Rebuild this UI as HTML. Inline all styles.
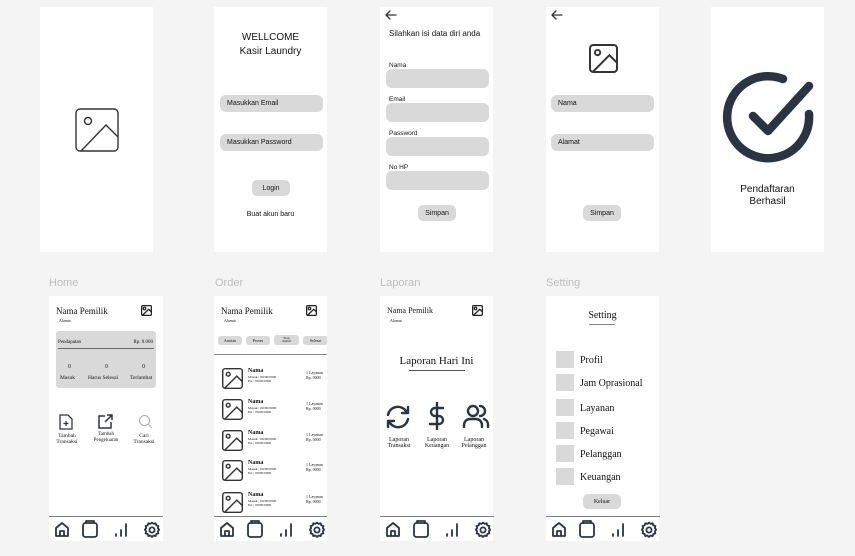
<!DOCTYPE html>
<html><head><meta charset="utf-8"><style>
*{margin:0;padding:0;box-sizing:border-box}
body{width:855px;height:556px;background:#f4f4f4;position:relative;overflow:hidden;font-family:"Liberation Sans",sans-serif;color:#111}
.c{position:absolute;background:#fff}
.a{position:absolute}
.f{position:absolute;background:#d9d9d9;border-radius:6px;font-size:7px;padding-left:7px;display:flex;align-items:center}
.b{position:absolute;background:#d9d9d9;border-radius:5px;font-size:7px;display:flex;align-items:center;justify-content:center}
.s{font-family:"Liberation Serif",serif}
.lbl{position:absolute;top:277px;font-size:11px;color:#bdbdbd}
.nav{position:absolute;left:0;top:220px;width:114px;height:25px;border-top:1.5px solid #7c8088}
.sq{position:absolute;left:10px;width:18px;height:17px;background:#d9d9d9}
.si{position:absolute;left:34px;font-size:10px}
.bk{position:absolute;left:5px;top:3px;width:12px;height:10px}
</style></head><body>
<svg width="0" height="0" style="position:absolute">
<defs>
<symbol id="img" viewBox="0 0 44 44"><rect x="1" y="1" width="42" height="42" rx="4" fill="none" stroke="#333" stroke-width="1.4"/><circle cx="13" cy="13" r="3.5" fill="none" stroke="#333" stroke-width="1.4"/><polyline points="6,43 31,17 43,29" fill="none" stroke="#333" stroke-width="1.4"/></symbol>
<symbol id="imgm" viewBox="0 0 44 44"><rect x="1.5" y="1.5" width="41" height="41" rx="5" fill="none" stroke="#333" stroke-width="3"/><circle cx="13" cy="13" r="4" fill="none" stroke="#333" stroke-width="3"/><polyline points="6,42 31,17 42,28" fill="none" stroke="#333" stroke-width="3"/></symbol>
<symbol id="imgs" viewBox="0 0 44 44"><rect x="2.5" y="2.5" width="39" height="39" rx="5" fill="none" stroke="#222" stroke-width="5"/><circle cx="14" cy="14" r="5" fill="none" stroke="#222" stroke-width="5"/><polyline points="6,41 31,17 42,28" fill="none" stroke="#222" stroke-width="5"/></symbol>
<symbol id="nav" viewBox="0 0 114 25"><g fill="none" stroke="#2c3444" stroke-width="1.8" stroke-linejoin="round" stroke-linecap="round">
<path d="M7 19V11l6-5 6 5v8zM11 19v-5h4v5"/>
<rect x="34" y="6" width="14" height="14" rx="2.5"/><path d="M37 6V4h8v2"/>
<path d="M67 19v-2M72 19v-6M77 19V7"/>
<circle cx="103" cy="13" r="2.6"/><path d="M103 5.5l1.6 1.4 2.1-.6.6 2.1 2.1.6-.6 2.1 1.4 1.6-1.4 1.6.6 2.1-2.1.6-.6 2.1-2.1-.6-1.6 1.4-1.6-1.4-2.1.6-.6-2.1-2.1-.6.6-2.1-1.4-1.6 1.4-1.6-.6-2.1 2.1-.6.6-2.1 2.1.6z"/>
</g></symbol>
<symbol id="back" viewBox="0 0 12 10"><path d="M11 5H1.5M5 1L1 5l4 4" fill="none" stroke="#333" stroke-width="1.3" stroke-linecap="round" stroke-linejoin="round"/></symbol>
</defs></svg>

<div class="c" style="left:40px;top:7px;width:113px;height:245px"><svg class="a" style="left:35px;top:101px" width="44" height="44"><use href="#img"/></svg></div>

<div class="c" style="left:214px;top:7px;width:113px;height:245px">
<div class="a" style="left:0;width:113px;top:24px;text-align:center;font-size:10px;line-height:14px">WELLCOME<br>Kasir Laundry</div>
<div class="f" style="left:6px;top:88px;width:103px;height:17px">Masukkan Email</div>
<div class="f" style="left:6px;top:127px;width:103px;height:17px">Masukkan Password</div>
<div class="b" style="left:38px;top:173px;width:38px;height:16px">Login</div>
<div class="a" style="left:0;width:113px;top:204px;text-align:center;font-size:7px">Buat akun baru</div>
</div>

<div class="c" style="left:380px;top:7px;width:113px;height:245px">
<svg class="bk"><use href="#back"/></svg>
<div class="a" style="left:9px;top:22px;font-size:8px">Silahkan isi data diri anda</div>
<div class="a" style="left:9px;top:55px;font-size:6.5px">Nama</div><div class="f" style="left:6px;top:62px;width:103px;height:19px"></div>
<div class="a" style="left:9px;top:89px;font-size:6.5px">Email</div><div class="f" style="left:6px;top:96px;width:103px;height:19px"></div>
<div class="a" style="left:9px;top:123px;font-size:6.5px">Password</div><div class="f" style="left:6px;top:130px;width:103px;height:19px"></div>
<div class="a" style="left:9px;top:157px;font-size:6.5px">No HP</div><div class="f" style="left:6px;top:164px;width:103px;height:19px"></div>
<div class="b" style="left:38px;top:198px;width:38px;height:16px">Simpan</div>
</div>

<div class="c" style="left:546px;top:7px;width:113px;height:245px">
<svg class="bk"><use href="#back"/></svg>
<svg class="a" style="left:42px;top:37px" width="31" height="29"><use href="#imgm"/></svg>
<div class="f" style="left:5px;top:88px;width:103px;height:17px">Nama</div>
<div class="f" style="left:5px;top:127px;width:103px;height:17px">Alamat</div>
<div class="b" style="left:37px;top:198px;width:38px;height:16px">Simpan</div>
</div>

<div class="c" style="left:711px;top:7px;width:113px;height:245px">
<svg class="a" style="left:0;top:60px" width="113" height="110" viewBox="711 67 113 110"><g fill="none" stroke="#2c3444" stroke-width="8.5" stroke-linecap="round" stroke-linejoin="round"><path d="M783 79A41 41 0 1 0 809 114"/><path d="M753 116l15 15 41-45"/></g></svg>
<div class="a" style="left:0;width:113px;top:177px;text-align:center;font-size:10px;line-height:12px">Pendaftaran<br>Berhasil</div>
</div>

<div class="lbl" style="left:49px">Home</div>
<div class="lbl" style="left:215px">Order</div>
<div class="lbl" style="left:380px">Laporan</div>
<div class="lbl" style="left:546px">Setting</div>

<div class="c s" style="left:49px;top:296px;width:114px;height:245px">
<div class="a" style="left:7px;top:10px;font-size:9px">Nama Pemilik</div>
<div class="a" style="left:10px;top:22px;font-size:4px">Alamat</div>
<svg class="a" style="left:92px;top:9px" width="11" height="11"><use href="#imgs"/></svg>
<div class="a" style="left:7px;top:35px;width:100px;height:57px;background:#d9d9d9;border-radius:3px">
<div class="a" style="left:2px;top:9px;font-size:5px">Pendapatan</div>
<div class="a" style="right:3px;top:9px;font-size:5px">Rp. 0.000</div>
<div class="a" style="left:2px;top:17px;width:96px;border-top:1px solid #666"></div>
<div class="a" style="left:12px;top:33px;font-size:6px">0</div><div class="a" style="left:49px;top:33px;font-size:6px">0</div><div class="a" style="left:86px;top:33px;font-size:6px">0</div>
<div class="a" style="left:4px;top:44px;font-size:5.5px">Masuk</div><div class="a" style="left:32px;top:44px;font-size:5.5px">Harus Selesai</div><div class="a" style="left:74px;top:44px;font-size:5.5px">Terlambat</div>
</div>
<svg class="a" style="left:10px;top:118px" width="14" height="16" viewBox="0 0 14 16"><g fill="none" stroke="#2c3444" stroke-width="1.3"><path d="M1 1h8l4 4v10H1z"/><path d="M7 7v5M4.5 9.5h5"/></g></svg>
<svg class="a" style="left:49px;top:118px" width="15" height="15" viewBox="0 0 15 15"><g fill="none" stroke="#2c3444" stroke-width="1.5"><path d="M7 2H1v12h12V8M9 1h5v5M14 1L7 8"/></g></svg>
<svg class="a" style="left:89px;top:118px" width="15" height="15" viewBox="0 0 15 15"><g fill="none" stroke="#aaa" stroke-width="1"><circle cx="6.5" cy="6.5" r="5"/><path d="M10 10l4 4"/></g></svg>
<div class="a" style="left:3px;top:137px;width:30px;text-align:center;font-size:5.5px;line-height:6px">Tambah<br>Transaksi</div>
<div class="a" style="left:38px;top:136px;width:38px;text-align:center;font-size:5px;line-height:5.5px">Tambah<br>Pengeluaran</div>
<div class="a" style="left:80px;top:137px;width:30px;text-align:center;font-size:5.5px;line-height:6px">Cari<br>Transaksi</div>
<div class="nav"><svg width="114" height="25"><use href="#nav"/></svg></div>
</div>

<div class="c s" style="left:214px;top:296px;width:113px;height:245px;overflow:hidden">
<div class="a" style="left:7px;top:10px;font-size:9px">Nama Pemilik</div>
<div class="a" style="left:10px;top:22px;font-size:4px">Alamat</div>
<svg class="a" style="left:92px;top:9px" width="11" height="11"><use href="#imgs"/></svg>
<div class="b" style="left:4px;top:40px;width:24px;height:9px;font-size:4px;border-radius:3px">Antrian</div>
<div class="b" style="left:32px;top:40px;width:24px;height:9px;font-size:4px;border-radius:3px">Proses</div>
<div class="b" style="left:60px;top:39px;width:25px;height:10px;font-size:3.5px;line-height:3.5px;text-align:center;border-radius:3px">Siap<br>Ambil</div>
<div class="b" style="left:89px;top:40px;width:25px;height:9px;font-size:4px;border-radius:3px">Selesai</div>
<div class="a" style="left:0;top:58px;width:113px;border-top:1px solid #888"></div>
<div class="a" style="left:0;top:72px;width:113px">
<div class="a" style="top:0;left:0;width:113px;height:24px"><svg class="a" style="left:8px;top:0" width="21" height="21"><use href="#imgm"/></svg><div class="a" style="left:34px;top:0;font-size:6px;font-weight:bold">Nama</div><div class="a" style="left:34px;top:7px;font-size:3.5px;line-height:4px">Masuk : 00/00/0000<br>Est : 00/00/0000</div><div class="a" style="left:92px;top:3px;font-size:4px;line-height:4.5px">1 Layanan<br>Rp. 0000</div></div>
<div class="a" style="top:31px;left:0;width:113px;height:24px"><svg class="a" style="left:8px;top:0" width="21" height="21"><use href="#imgm"/></svg><div class="a" style="left:34px;top:0;font-size:6px;font-weight:bold">Nama</div><div class="a" style="left:34px;top:7px;font-size:3.5px;line-height:4px">Masuk : 00/00/0000<br>Est : 00/00/0000</div><div class="a" style="left:92px;top:3px;font-size:4px;line-height:4.5px">1 Layanan<br>Rp. 0000</div></div>
<div class="a" style="top:62px;left:0;width:113px;height:24px"><svg class="a" style="left:8px;top:0" width="21" height="21"><use href="#imgm"/></svg><div class="a" style="left:34px;top:0;font-size:6px;font-weight:bold">Nama</div><div class="a" style="left:34px;top:7px;font-size:3.5px;line-height:4px">Masuk : 00/00/0000<br>Est : 00/00/0000</div><div class="a" style="left:92px;top:3px;font-size:4px;line-height:4.5px">1 Layanan<br>Rp. 0000</div></div>
<div class="a" style="top:92px;left:0;width:113px;height:24px"><svg class="a" style="left:8px;top:0" width="21" height="21"><use href="#imgm"/></svg><div class="a" style="left:34px;top:0;font-size:6px;font-weight:bold">Nama</div><div class="a" style="left:34px;top:7px;font-size:3.5px;line-height:4px">Masuk : 00/00/0000<br>Est : 00/00/0000</div><div class="a" style="left:92px;top:3px;font-size:4px;line-height:4.5px">1 Layanan<br>Rp. 0000</div></div>
<div class="a" style="top:124px;left:0;width:113px;height:24px"><svg class="a" style="left:8px;top:0" width="21" height="21"><use href="#imgm"/></svg><div class="a" style="left:34px;top:0;font-size:6px;font-weight:bold">Nama</div><div class="a" style="left:34px;top:7px;font-size:3.5px;line-height:4px">Masuk : 00/00/0000<br>Est : 00/00/0000</div><div class="a" style="left:92px;top:3px;font-size:4px;line-height:4.5px">1 Layanan<br>Rp. 0000</div></div>
</div>
<div class="nav" style="background:#fff"><svg width="114" height="25"><use href="#nav"/></svg></div>
</div>

<div class="c s" style="left:380px;top:296px;width:113px;height:245px">
<div class="a" style="left:7px;top:10px;font-size:8px">Nama Pemilik</div>
<div class="a" style="left:10px;top:22px;font-size:4px">Alamat</div>
<svg class="a" style="left:92px;top:9px" width="11" height="11"><use href="#imgs"/></svg>
<div class="a" style="left:0;width:113px;top:59px;text-align:center;font-size:11px">Laporan Hari Ini</div>
<div class="a" style="left:29px;top:74px;width:56px;border-top:1.5px solid #555"></div>
<svg class="a" style="left:4px;top:108px" width="28" height="26" viewBox="0 0 28 26"><g fill="none" stroke="#2c3444" stroke-width="2.4" stroke-linecap="round" stroke-linejoin="round"><path d="M4 11a10 10 0 0 1 18-4l2 2M24 3v6h-6M24 15a10 10 0 0 1-18 4l-2-2M4 23v-6h6"/></g></svg>
<svg class="a" style="left:48px;top:106px" width="18" height="28" viewBox="0 0 18 28"><g fill="none" stroke="#2c3444" stroke-width="2.4" stroke-linecap="round"><path d="M9 1v26M15 6H7a4 4 0 0 0 0 8h4a4 4 0 0 1 0 8H2"/></g></svg>
<svg class="a" style="left:82px;top:108px" width="28" height="24" viewBox="0 0 28 24"><g fill="none" stroke="#2c3444" stroke-width="2.4" stroke-linecap="round"><circle cx="11" cy="7" r="5"/><path d="M2 23v-2a6 6 0 0 1 6-6h6a6 6 0 0 1 6 6v2M18 2a5 5 0 0 1 0 10M22 15a6 6 0 0 1 4 6v2"/></g></svg>
<div class="a" style="left:0;top:141px;width:38px;text-align:center;font-size:6px;line-height:6px">Laporan<br>Transaksi</div>
<div class="a" style="left:38px;top:141px;width:38px;text-align:center;font-size:6px;line-height:6px">Laporan<br>Keuangan</div>
<div class="a" style="left:75px;top:141px;width:38px;text-align:center;font-size:6px;line-height:6px">Laporan<br>Pelanggan</div>
<div class="nav"><svg width="114" height="25"><use href="#nav"/></svg></div>
</div>

<div class="c s" style="left:546px;top:296px;width:113px;height:245px">
<div class="a" style="left:0;width:113px;top:14px;text-align:center;font-size:10px">Setting</div>
<div class="a" style="left:43px;top:28px;width:26px;border-top:1.5px solid #888"></div>
<div class="sq" style="top:55px"></div><div class="si" style="top:59px">Profil</div>
<div class="sq" style="top:78px"></div><div class="si" style="top:82px">Jam Oprasional</div>
<div class="sq" style="top:103px"></div><div class="si" style="top:107px">Layanan</div>
<div class="sq" style="top:126px"></div><div class="si" style="top:130px">Pegawai</div>
<div class="sq" style="top:149px"></div><div class="si" style="top:153px">Pelanggan</div>
<div class="sq" style="top:172px"></div><div class="si" style="top:176px">Keuangan</div>
<div class="b" style="left:37px;top:198px;width:38px;height:15px;font-size:6px">Keluar</div>
<div class="nav"><svg width="114" height="25"><use href="#nav"/></svg></div>
</div>
</body></html>
